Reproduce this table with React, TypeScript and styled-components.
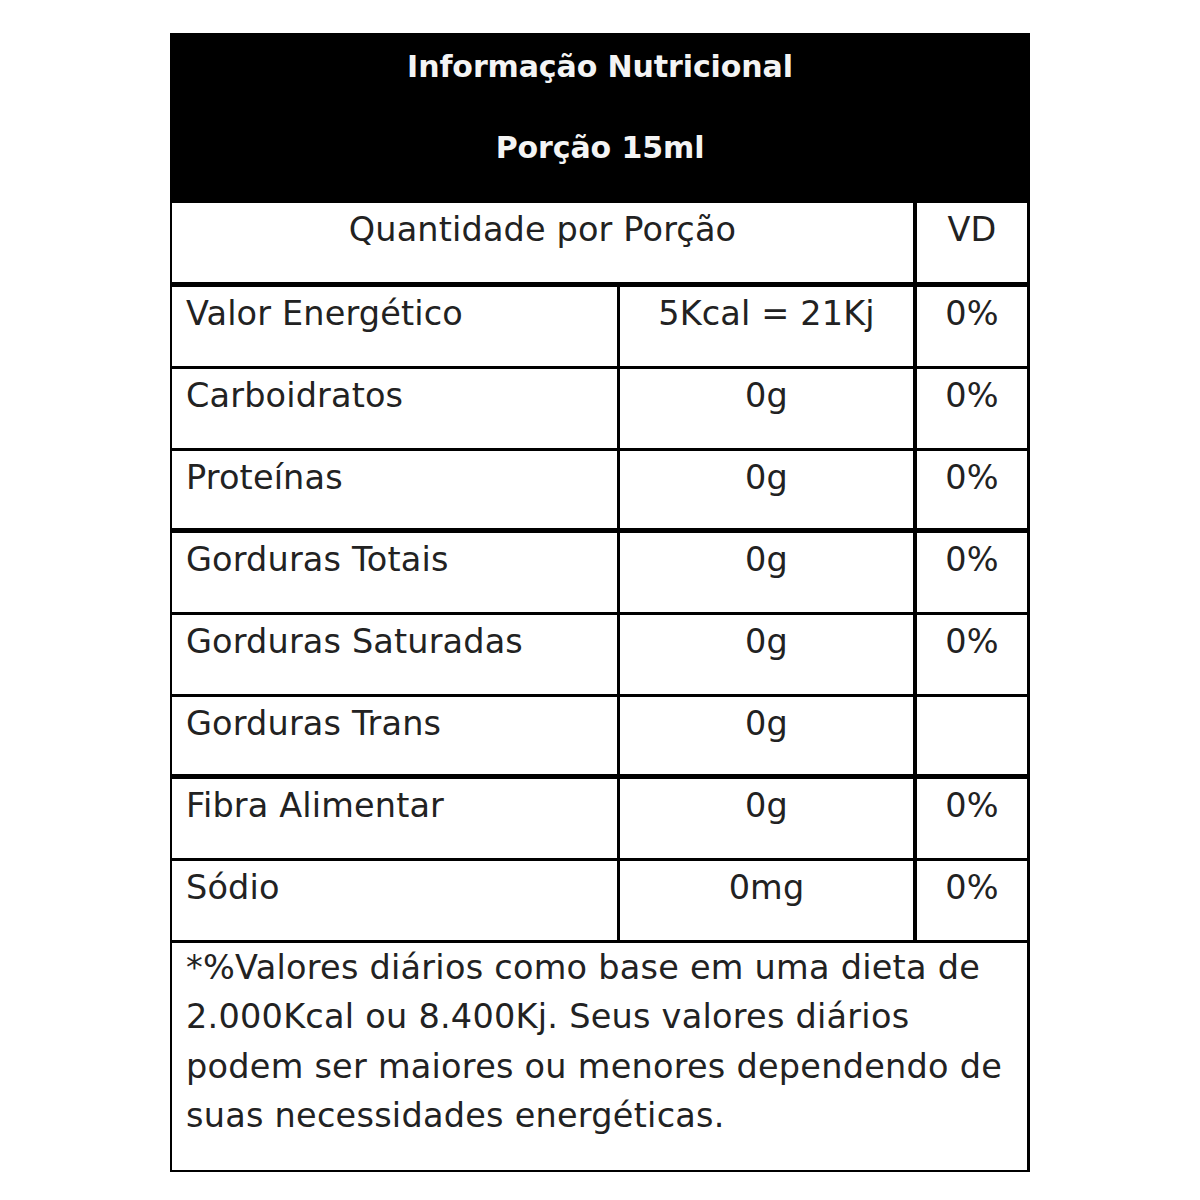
import React from 'react';
import styled, { createGlobalStyle } from 'styled-components';

const GlobalStyle = createGlobalStyle`
  html, body {
    margin: 0;
    padding: 0;
    background: #ffffff;
  }
  body {
    font-family: "DejaVu Sans", Verdana, sans-serif;
    color: #222222;
  }
`;

interface Nutrient {
  name: string,
  amount: string,
  vd: string,
  thick?: boolean
}

const nutrients: Nutrient[] = [
  { name: "Valor Energético", amount: "5Kcal = 21Kj", vd: "0%" },
  { name: "Carboidratos", amount: "0g", vd: "0%" },
  { name: "Proteínas", amount: "0g", vd: "0%", thick: true },
  { name: "Gorduras Totais", amount: "0g", vd: "0%" },
  { name: "Gorduras Saturadas", amount: "0g", vd: "0%" },
  { name: "Gorduras Trans", amount: "0g", vd: "", thick: true },
  { name: "Fibra Alimentar", amount: "0g", vd: "0%" },
  { name: "Sódio", amount: "0mg", vd: "0%" },
];

export default function App() {
  return <>
    <GlobalStyle />
    <Page>
      <Label>
        <Header>
          <Title>Informação Nutricional</Title>
          <Title>Porção 15ml</Title>
        </Header>
        <Row $height={84} $thick>
          <WideCell>Quantidade por Porção</WideCell>
          <VdCell>VD</VdCell>
        </Row>
        {nutrients.map(n => (
          <Row key={n.name} $height={82} $thick={n.thick}>
            <NameCell>{n.name}</NameCell>
            <AmountCell>{n.amount}</AmountCell>
            <VdCell>{n.vd}</VdCell>
          </Row>
        ))}
        <Footer>
          *%Valores diários como base em uma dieta de<br />
          2.000Kcal ou 8.400Kj. Seus valores diários<br />
          podem ser maiores ou menores dependendo de<br />
          suas necessidades energéticas.
        </Footer>
      </Label>
    </Page>
  </>
}

const Page = styled.div`
  width: 1200px;
  height: 1200px;
  padding-top: 33px;
  box-sizing: border-box;
`;

const Label = styled.div`
  width: 860px;
  margin: 0 auto;
  border: 2px solid #000;
  border-right-width: 3px;
  box-sizing: border-box;
  background: #fff;
`;

const Header = styled.div`
  background: #000;
  height: 170px;
  margin: -2px -3px 0 -2px;
  padding-top: 14px;
  box-sizing: border-box;
  display: flex;
  flex-direction: column;
  align-items: center;
  gap: 41px;
`;

const Title = styled.div`
  color: #f4f4f4;
  font-size: 30px;
  font-weight: bold;
  line-height: 40px;
  letter-spacing: -0.1px;
`;

const Row = styled.div<{ $height: number, $thick?: boolean }>`
  display: grid;
  grid-template-columns: 448px 297px 1fr;
  height: ${p => p.$height}px;
  box-sizing: border-box;
  border-bottom: ${p => p.$thick ? 5 : 3}px solid #000;
`;

const Cell = styled.div`
  font-size: 33.5px;
  line-height: 40px;
  padding-top: 7px;
  white-space: nowrap;
  letter-spacing: 0.15px;
  color: #222;
`;

const NameCell = styled(Cell)`
  padding-left: 14px;
  border-right: 3px solid #000;
`;

const AmountCell = styled(Cell)`
  text-align: center;
  border-right: 4px solid #000;
`;

const WideCell = styled(Cell)`
  grid-column: span 2;
  text-align: center;
  border-right: 4px solid #000;
`;

const VdCell = styled(Cell)`
  text-align: center;
`;

const Footer = styled.div`
  font-size: 33.5px;
  line-height: 49.3px;
  padding: 0 0 0 14px;
  height: 227px;
  box-sizing: border-box;
  white-space: nowrap;
  letter-spacing: 0.25px;
  color: #222;
`;
